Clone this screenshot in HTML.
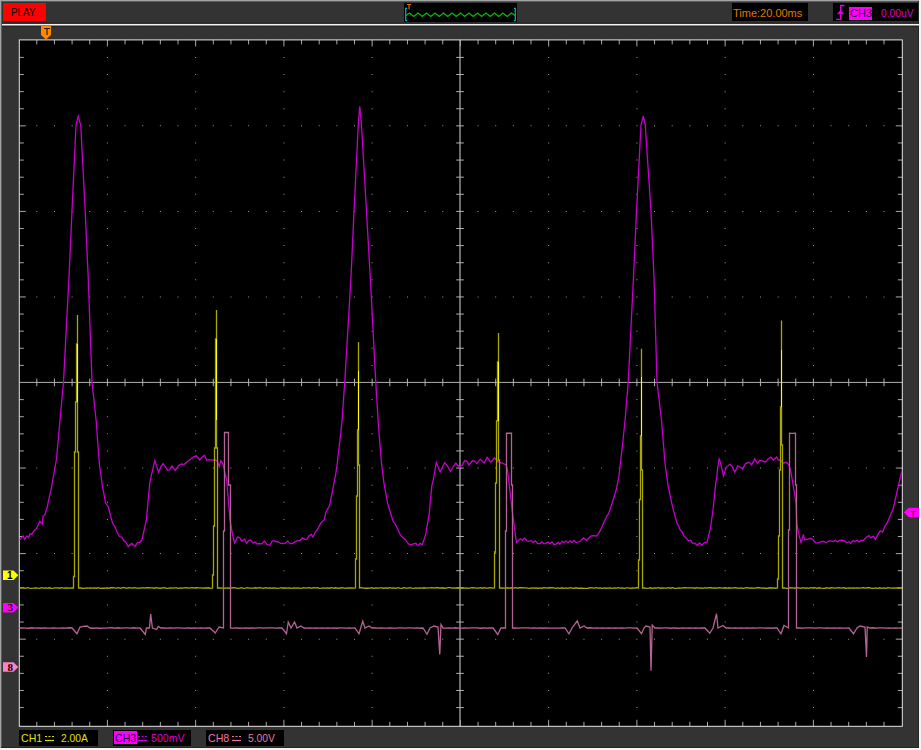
<!DOCTYPE html>
<html><head><meta charset="utf-8"><style>
html,body{margin:0;padding:0;}
body{width:921px;height:750px;overflow:hidden;background:#333;position:relative;font-family:"Liberation Sans",sans-serif;}
.a{position:absolute;}
.t{position:absolute;white-space:nowrap;font-size:11px;line-height:13px;}
</style></head><body>
<div class="a" style="left:0;top:0;width:921px;height:1px;background:#a4a4a4"></div>
<div class="a" style="left:0;top:0;width:1px;height:750px;background:#a4a4a4"></div>
<div class="a" style="left:1px;top:1px;width:918px;height:1px;background:#5a5a5a"></div>
<div class="a" style="left:1px;top:1px;width:1px;height:747px;background:#5a5a5a"></div>
<div class="a" style="left:918px;top:1px;width:1px;height:747px;background:#262626"></div>
<div class="a" style="left:1px;top:747px;width:918px;height:1px;background:#262626"></div>
<div class="a" style="left:919px;top:0;width:2px;height:750px;background:#f4f4f4"></div>
<div class="a" style="left:0;top:748px;width:921px;height:2px;background:#f4f4f4"></div>
<div class="a" style="left:2px;top:22px;width:917px;height:1px;background:#2a2a2a"></div>
<div class="a" style="left:2px;top:24px;width:917px;height:1px;background:#f2f2f2"></div>
<div class="a" style="left:2px;top:25px;width:917px;height:1px;background:#8a8a8a"></div>
<div class="a" style="left:2px;top:26px;width:917px;height:1px;background:#242424"></div>
<!-- PLAY -->
<div class="a" style="left:2px;top:2px;width:45px;height:1px;background:#263434"></div><div class="a" style="left:2px;top:2px;width:1px;height:20px;background:#263434"></div>
<div class="a" style="left:3px;top:3px;width:43px;height:18px;background:#ff0000"></div>
<div class="t" style="left:10.9px;top:5.7px;color:#0a0000;font-size:10.7px;transform:scaleX(0.923);transform-origin:0 0">PLAY</div>
<!-- mini wave box -->
<div class="a" style="left:404px;top:3px;width:113px;height:19px;background:#000"></div>
<!-- time box -->
<div class="a" style="left:732px;top:3px;width:76px;height:18px;background:#000"></div>
<div class="t" style="left:733px;top:7px;color:#e07800">Time:20.00ms</div>
<!-- trigger box -->
<div class="a" style="left:833px;top:3px;width:85px;height:18px;background:#000"></div>
<div class="a" style="left:849px;top:7px;width:23px;height:13px;background:#ff00ff"></div>
<div class="t" style="left:850px;top:7px;color:#280048">CH3</div>
<div class="t" style="left:881px;top:7px;color:#d800d8;font-size:10.3px">0.00uV</div>
<!-- bottom boxes -->
<div class="a" style="left:19px;top:730px;width:79px;height:16px;background:#000"></div>
<div class="t" style="left:21px;top:731.5px;color:#e0e000;font-size:10.6px">CH1</div>
<div class="t" style="left:61px;top:731.5px;color:#e0e000;font-size:10.3px">2.00A</div>
<div class="a" style="left:113px;top:730px;width:78px;height:16px;background:#000"></div>
<div class="a" style="left:114px;top:731px;width:23px;height:13px;background:#ff00ff"></div>
<div class="t" style="left:115px;top:731.5px;color:#280048;font-size:10.6px">CH3</div>
<div class="t" style="left:151px;top:731.5px;color:#d800d8;font-size:10.6px">500mV</div>
<div class="a" style="left:206px;top:730px;width:78px;height:16px;background:#000"></div>
<div class="t" style="left:208px;top:731.5px;color:#e878a8;font-size:10.6px">CH8</div>
<div class="t" style="left:248px;top:731.5px;color:#e878a8;font-size:10.3px">5.00V</div>
<svg class="a" style="left:0;top:0" width="921" height="750" viewBox="0 0 921 750">
<rect x="19.3" y="39.9" width="883.0" height="686.4" fill="#000"/>
<path d="M106.90 56.91h1v1h-1zM106.90 74.02h1v1h-1zM106.90 91.13h1v1h-1zM106.90 108.24h1v1h-1zM106.90 125.35h1v1h-1zM106.90 142.46h1v1h-1zM106.90 159.57h1v1h-1zM106.90 176.68h1v1h-1zM106.90 193.79h1v1h-1zM106.90 210.90h1v1h-1zM106.90 228.01h1v1h-1zM106.90 245.12h1v1h-1zM106.90 262.23h1v1h-1zM106.90 279.34h1v1h-1zM106.90 296.45h1v1h-1zM106.90 313.56h1v1h-1zM106.90 330.67h1v1h-1zM106.90 347.78h1v1h-1zM106.90 364.89h1v1h-1zM106.90 382.00h1v1h-1zM106.90 399.11h1v1h-1zM106.90 416.22h1v1h-1zM106.90 433.33h1v1h-1zM106.90 450.44h1v1h-1zM106.90 467.55h1v1h-1zM106.90 484.66h1v1h-1zM106.90 501.77h1v1h-1zM106.90 518.88h1v1h-1zM106.90 535.99h1v1h-1zM106.90 553.10h1v1h-1zM106.90 570.21h1v1h-1zM106.90 587.32h1v1h-1zM106.90 604.43h1v1h-1zM106.90 621.54h1v1h-1zM106.90 638.65h1v1h-1zM106.90 655.76h1v1h-1zM106.90 672.87h1v1h-1zM106.90 689.98h1v1h-1zM106.90 707.09h1v1h-1zM195.15 56.91h1v1h-1zM195.15 74.02h1v1h-1zM195.15 91.13h1v1h-1zM195.15 108.24h1v1h-1zM195.15 125.35h1v1h-1zM195.15 142.46h1v1h-1zM195.15 159.57h1v1h-1zM195.15 176.68h1v1h-1zM195.15 193.79h1v1h-1zM195.15 210.90h1v1h-1zM195.15 228.01h1v1h-1zM195.15 245.12h1v1h-1zM195.15 262.23h1v1h-1zM195.15 279.34h1v1h-1zM195.15 296.45h1v1h-1zM195.15 313.56h1v1h-1zM195.15 330.67h1v1h-1zM195.15 347.78h1v1h-1zM195.15 364.89h1v1h-1zM195.15 382.00h1v1h-1zM195.15 399.11h1v1h-1zM195.15 416.22h1v1h-1zM195.15 433.33h1v1h-1zM195.15 450.44h1v1h-1zM195.15 467.55h1v1h-1zM195.15 484.66h1v1h-1zM195.15 501.77h1v1h-1zM195.15 518.88h1v1h-1zM195.15 535.99h1v1h-1zM195.15 553.10h1v1h-1zM195.15 570.21h1v1h-1zM195.15 587.32h1v1h-1zM195.15 604.43h1v1h-1zM195.15 621.54h1v1h-1zM195.15 638.65h1v1h-1zM195.15 655.76h1v1h-1zM195.15 672.87h1v1h-1zM195.15 689.98h1v1h-1zM195.15 707.09h1v1h-1zM283.40 56.91h1v1h-1zM283.40 74.02h1v1h-1zM283.40 91.13h1v1h-1zM283.40 108.24h1v1h-1zM283.40 125.35h1v1h-1zM283.40 142.46h1v1h-1zM283.40 159.57h1v1h-1zM283.40 176.68h1v1h-1zM283.40 193.79h1v1h-1zM283.40 210.90h1v1h-1zM283.40 228.01h1v1h-1zM283.40 245.12h1v1h-1zM283.40 262.23h1v1h-1zM283.40 279.34h1v1h-1zM283.40 296.45h1v1h-1zM283.40 313.56h1v1h-1zM283.40 330.67h1v1h-1zM283.40 347.78h1v1h-1zM283.40 364.89h1v1h-1zM283.40 382.00h1v1h-1zM283.40 399.11h1v1h-1zM283.40 416.22h1v1h-1zM283.40 433.33h1v1h-1zM283.40 450.44h1v1h-1zM283.40 467.55h1v1h-1zM283.40 484.66h1v1h-1zM283.40 501.77h1v1h-1zM283.40 518.88h1v1h-1zM283.40 535.99h1v1h-1zM283.40 553.10h1v1h-1zM283.40 570.21h1v1h-1zM283.40 587.32h1v1h-1zM283.40 604.43h1v1h-1zM283.40 621.54h1v1h-1zM283.40 638.65h1v1h-1zM283.40 655.76h1v1h-1zM283.40 672.87h1v1h-1zM283.40 689.98h1v1h-1zM283.40 707.09h1v1h-1zM371.65 56.91h1v1h-1zM371.65 74.02h1v1h-1zM371.65 91.13h1v1h-1zM371.65 108.24h1v1h-1zM371.65 125.35h1v1h-1zM371.65 142.46h1v1h-1zM371.65 159.57h1v1h-1zM371.65 176.68h1v1h-1zM371.65 193.79h1v1h-1zM371.65 210.90h1v1h-1zM371.65 228.01h1v1h-1zM371.65 245.12h1v1h-1zM371.65 262.23h1v1h-1zM371.65 279.34h1v1h-1zM371.65 296.45h1v1h-1zM371.65 313.56h1v1h-1zM371.65 330.67h1v1h-1zM371.65 347.78h1v1h-1zM371.65 364.89h1v1h-1zM371.65 382.00h1v1h-1zM371.65 399.11h1v1h-1zM371.65 416.22h1v1h-1zM371.65 433.33h1v1h-1zM371.65 450.44h1v1h-1zM371.65 467.55h1v1h-1zM371.65 484.66h1v1h-1zM371.65 501.77h1v1h-1zM371.65 518.88h1v1h-1zM371.65 535.99h1v1h-1zM371.65 553.10h1v1h-1zM371.65 570.21h1v1h-1zM371.65 587.32h1v1h-1zM371.65 604.43h1v1h-1zM371.65 621.54h1v1h-1zM371.65 638.65h1v1h-1zM371.65 655.76h1v1h-1zM371.65 672.87h1v1h-1zM371.65 689.98h1v1h-1zM371.65 707.09h1v1h-1zM548.15 56.91h1v1h-1zM548.15 74.02h1v1h-1zM548.15 91.13h1v1h-1zM548.15 108.24h1v1h-1zM548.15 125.35h1v1h-1zM548.15 142.46h1v1h-1zM548.15 159.57h1v1h-1zM548.15 176.68h1v1h-1zM548.15 193.79h1v1h-1zM548.15 210.90h1v1h-1zM548.15 228.01h1v1h-1zM548.15 245.12h1v1h-1zM548.15 262.23h1v1h-1zM548.15 279.34h1v1h-1zM548.15 296.45h1v1h-1zM548.15 313.56h1v1h-1zM548.15 330.67h1v1h-1zM548.15 347.78h1v1h-1zM548.15 364.89h1v1h-1zM548.15 382.00h1v1h-1zM548.15 399.11h1v1h-1zM548.15 416.22h1v1h-1zM548.15 433.33h1v1h-1zM548.15 450.44h1v1h-1zM548.15 467.55h1v1h-1zM548.15 484.66h1v1h-1zM548.15 501.77h1v1h-1zM548.15 518.88h1v1h-1zM548.15 535.99h1v1h-1zM548.15 553.10h1v1h-1zM548.15 570.21h1v1h-1zM548.15 587.32h1v1h-1zM548.15 604.43h1v1h-1zM548.15 621.54h1v1h-1zM548.15 638.65h1v1h-1zM548.15 655.76h1v1h-1zM548.15 672.87h1v1h-1zM548.15 689.98h1v1h-1zM548.15 707.09h1v1h-1zM636.40 56.91h1v1h-1zM636.40 74.02h1v1h-1zM636.40 91.13h1v1h-1zM636.40 108.24h1v1h-1zM636.40 125.35h1v1h-1zM636.40 142.46h1v1h-1zM636.40 159.57h1v1h-1zM636.40 176.68h1v1h-1zM636.40 193.79h1v1h-1zM636.40 210.90h1v1h-1zM636.40 228.01h1v1h-1zM636.40 245.12h1v1h-1zM636.40 262.23h1v1h-1zM636.40 279.34h1v1h-1zM636.40 296.45h1v1h-1zM636.40 313.56h1v1h-1zM636.40 330.67h1v1h-1zM636.40 347.78h1v1h-1zM636.40 364.89h1v1h-1zM636.40 382.00h1v1h-1zM636.40 399.11h1v1h-1zM636.40 416.22h1v1h-1zM636.40 433.33h1v1h-1zM636.40 450.44h1v1h-1zM636.40 467.55h1v1h-1zM636.40 484.66h1v1h-1zM636.40 501.77h1v1h-1zM636.40 518.88h1v1h-1zM636.40 535.99h1v1h-1zM636.40 553.10h1v1h-1zM636.40 570.21h1v1h-1zM636.40 587.32h1v1h-1zM636.40 604.43h1v1h-1zM636.40 621.54h1v1h-1zM636.40 638.65h1v1h-1zM636.40 655.76h1v1h-1zM636.40 672.87h1v1h-1zM636.40 689.98h1v1h-1zM636.40 707.09h1v1h-1zM724.65 56.91h1v1h-1zM724.65 74.02h1v1h-1zM724.65 91.13h1v1h-1zM724.65 108.24h1v1h-1zM724.65 125.35h1v1h-1zM724.65 142.46h1v1h-1zM724.65 159.57h1v1h-1zM724.65 176.68h1v1h-1zM724.65 193.79h1v1h-1zM724.65 210.90h1v1h-1zM724.65 228.01h1v1h-1zM724.65 245.12h1v1h-1zM724.65 262.23h1v1h-1zM724.65 279.34h1v1h-1zM724.65 296.45h1v1h-1zM724.65 313.56h1v1h-1zM724.65 330.67h1v1h-1zM724.65 347.78h1v1h-1zM724.65 364.89h1v1h-1zM724.65 382.00h1v1h-1zM724.65 399.11h1v1h-1zM724.65 416.22h1v1h-1zM724.65 433.33h1v1h-1zM724.65 450.44h1v1h-1zM724.65 467.55h1v1h-1zM724.65 484.66h1v1h-1zM724.65 501.77h1v1h-1zM724.65 518.88h1v1h-1zM724.65 535.99h1v1h-1zM724.65 553.10h1v1h-1zM724.65 570.21h1v1h-1zM724.65 587.32h1v1h-1zM724.65 604.43h1v1h-1zM724.65 621.54h1v1h-1zM724.65 638.65h1v1h-1zM724.65 655.76h1v1h-1zM724.65 672.87h1v1h-1zM724.65 689.98h1v1h-1zM724.65 707.09h1v1h-1zM812.90 56.91h1v1h-1zM812.90 74.02h1v1h-1zM812.90 91.13h1v1h-1zM812.90 108.24h1v1h-1zM812.90 125.35h1v1h-1zM812.90 142.46h1v1h-1zM812.90 159.57h1v1h-1zM812.90 176.68h1v1h-1zM812.90 193.79h1v1h-1zM812.90 210.90h1v1h-1zM812.90 228.01h1v1h-1zM812.90 245.12h1v1h-1zM812.90 262.23h1v1h-1zM812.90 279.34h1v1h-1zM812.90 296.45h1v1h-1zM812.90 313.56h1v1h-1zM812.90 330.67h1v1h-1zM812.90 347.78h1v1h-1zM812.90 364.89h1v1h-1zM812.90 382.00h1v1h-1zM812.90 399.11h1v1h-1zM812.90 416.22h1v1h-1zM812.90 433.33h1v1h-1zM812.90 450.44h1v1h-1zM812.90 467.55h1v1h-1zM812.90 484.66h1v1h-1zM812.90 501.77h1v1h-1zM812.90 518.88h1v1h-1zM812.90 535.99h1v1h-1zM812.90 553.10h1v1h-1zM812.90 570.21h1v1h-1zM812.90 587.32h1v1h-1zM812.90 604.43h1v1h-1zM812.90 621.54h1v1h-1zM812.90 638.65h1v1h-1zM812.90 655.76h1v1h-1zM812.90 672.87h1v1h-1zM812.90 689.98h1v1h-1zM812.90 707.09h1v1h-1zM36.30 125.35h1v1h-1zM53.95 125.35h1v1h-1zM71.60 125.35h1v1h-1zM89.25 125.35h1v1h-1zM124.55 125.35h1v1h-1zM142.20 125.35h1v1h-1zM159.85 125.35h1v1h-1zM177.50 125.35h1v1h-1zM212.80 125.35h1v1h-1zM230.45 125.35h1v1h-1zM248.10 125.35h1v1h-1zM265.75 125.35h1v1h-1zM301.05 125.35h1v1h-1zM318.70 125.35h1v1h-1zM336.35 125.35h1v1h-1zM354.00 125.35h1v1h-1zM389.30 125.35h1v1h-1zM406.95 125.35h1v1h-1zM424.60 125.35h1v1h-1zM442.25 125.35h1v1h-1zM477.55 125.35h1v1h-1zM495.20 125.35h1v1h-1zM512.85 125.35h1v1h-1zM530.50 125.35h1v1h-1zM565.80 125.35h1v1h-1zM583.45 125.35h1v1h-1zM601.10 125.35h1v1h-1zM618.75 125.35h1v1h-1zM654.05 125.35h1v1h-1zM671.70 125.35h1v1h-1zM689.35 125.35h1v1h-1zM707.00 125.35h1v1h-1zM742.30 125.35h1v1h-1zM759.95 125.35h1v1h-1zM777.60 125.35h1v1h-1zM795.25 125.35h1v1h-1zM830.55 125.35h1v1h-1zM848.20 125.35h1v1h-1zM865.85 125.35h1v1h-1zM883.50 125.35h1v1h-1zM36.30 210.90h1v1h-1zM53.95 210.90h1v1h-1zM71.60 210.90h1v1h-1zM89.25 210.90h1v1h-1zM124.55 210.90h1v1h-1zM142.20 210.90h1v1h-1zM159.85 210.90h1v1h-1zM177.50 210.90h1v1h-1zM212.80 210.90h1v1h-1zM230.45 210.90h1v1h-1zM248.10 210.90h1v1h-1zM265.75 210.90h1v1h-1zM301.05 210.90h1v1h-1zM318.70 210.90h1v1h-1zM336.35 210.90h1v1h-1zM354.00 210.90h1v1h-1zM389.30 210.90h1v1h-1zM406.95 210.90h1v1h-1zM424.60 210.90h1v1h-1zM442.25 210.90h1v1h-1zM477.55 210.90h1v1h-1zM495.20 210.90h1v1h-1zM512.85 210.90h1v1h-1zM530.50 210.90h1v1h-1zM565.80 210.90h1v1h-1zM583.45 210.90h1v1h-1zM601.10 210.90h1v1h-1zM618.75 210.90h1v1h-1zM654.05 210.90h1v1h-1zM671.70 210.90h1v1h-1zM689.35 210.90h1v1h-1zM707.00 210.90h1v1h-1zM742.30 210.90h1v1h-1zM759.95 210.90h1v1h-1zM777.60 210.90h1v1h-1zM795.25 210.90h1v1h-1zM830.55 210.90h1v1h-1zM848.20 210.90h1v1h-1zM865.85 210.90h1v1h-1zM883.50 210.90h1v1h-1zM36.30 296.45h1v1h-1zM53.95 296.45h1v1h-1zM71.60 296.45h1v1h-1zM89.25 296.45h1v1h-1zM124.55 296.45h1v1h-1zM142.20 296.45h1v1h-1zM159.85 296.45h1v1h-1zM177.50 296.45h1v1h-1zM212.80 296.45h1v1h-1zM230.45 296.45h1v1h-1zM248.10 296.45h1v1h-1zM265.75 296.45h1v1h-1zM301.05 296.45h1v1h-1zM318.70 296.45h1v1h-1zM336.35 296.45h1v1h-1zM354.00 296.45h1v1h-1zM389.30 296.45h1v1h-1zM406.95 296.45h1v1h-1zM424.60 296.45h1v1h-1zM442.25 296.45h1v1h-1zM477.55 296.45h1v1h-1zM495.20 296.45h1v1h-1zM512.85 296.45h1v1h-1zM530.50 296.45h1v1h-1zM565.80 296.45h1v1h-1zM583.45 296.45h1v1h-1zM601.10 296.45h1v1h-1zM618.75 296.45h1v1h-1zM654.05 296.45h1v1h-1zM671.70 296.45h1v1h-1zM689.35 296.45h1v1h-1zM707.00 296.45h1v1h-1zM742.30 296.45h1v1h-1zM759.95 296.45h1v1h-1zM777.60 296.45h1v1h-1zM795.25 296.45h1v1h-1zM830.55 296.45h1v1h-1zM848.20 296.45h1v1h-1zM865.85 296.45h1v1h-1zM883.50 296.45h1v1h-1zM36.30 467.55h1v1h-1zM53.95 467.55h1v1h-1zM71.60 467.55h1v1h-1zM89.25 467.55h1v1h-1zM124.55 467.55h1v1h-1zM142.20 467.55h1v1h-1zM159.85 467.55h1v1h-1zM177.50 467.55h1v1h-1zM212.80 467.55h1v1h-1zM230.45 467.55h1v1h-1zM248.10 467.55h1v1h-1zM265.75 467.55h1v1h-1zM301.05 467.55h1v1h-1zM318.70 467.55h1v1h-1zM336.35 467.55h1v1h-1zM354.00 467.55h1v1h-1zM389.30 467.55h1v1h-1zM406.95 467.55h1v1h-1zM424.60 467.55h1v1h-1zM442.25 467.55h1v1h-1zM477.55 467.55h1v1h-1zM495.20 467.55h1v1h-1zM512.85 467.55h1v1h-1zM530.50 467.55h1v1h-1zM565.80 467.55h1v1h-1zM583.45 467.55h1v1h-1zM601.10 467.55h1v1h-1zM618.75 467.55h1v1h-1zM654.05 467.55h1v1h-1zM671.70 467.55h1v1h-1zM689.35 467.55h1v1h-1zM707.00 467.55h1v1h-1zM742.30 467.55h1v1h-1zM759.95 467.55h1v1h-1zM777.60 467.55h1v1h-1zM795.25 467.55h1v1h-1zM830.55 467.55h1v1h-1zM848.20 467.55h1v1h-1zM865.85 467.55h1v1h-1zM883.50 467.55h1v1h-1zM36.30 553.10h1v1h-1zM53.95 553.10h1v1h-1zM71.60 553.10h1v1h-1zM89.25 553.10h1v1h-1zM124.55 553.10h1v1h-1zM142.20 553.10h1v1h-1zM159.85 553.10h1v1h-1zM177.50 553.10h1v1h-1zM212.80 553.10h1v1h-1zM230.45 553.10h1v1h-1zM248.10 553.10h1v1h-1zM265.75 553.10h1v1h-1zM301.05 553.10h1v1h-1zM318.70 553.10h1v1h-1zM336.35 553.10h1v1h-1zM354.00 553.10h1v1h-1zM389.30 553.10h1v1h-1zM406.95 553.10h1v1h-1zM424.60 553.10h1v1h-1zM442.25 553.10h1v1h-1zM477.55 553.10h1v1h-1zM495.20 553.10h1v1h-1zM512.85 553.10h1v1h-1zM530.50 553.10h1v1h-1zM565.80 553.10h1v1h-1zM583.45 553.10h1v1h-1zM601.10 553.10h1v1h-1zM618.75 553.10h1v1h-1zM654.05 553.10h1v1h-1zM671.70 553.10h1v1h-1zM689.35 553.10h1v1h-1zM707.00 553.10h1v1h-1zM742.30 553.10h1v1h-1zM759.95 553.10h1v1h-1zM777.60 553.10h1v1h-1zM795.25 553.10h1v1h-1zM830.55 553.10h1v1h-1zM848.20 553.10h1v1h-1zM865.85 553.10h1v1h-1zM883.50 553.10h1v1h-1zM36.30 638.65h1v1h-1zM53.95 638.65h1v1h-1zM71.60 638.65h1v1h-1zM89.25 638.65h1v1h-1zM124.55 638.65h1v1h-1zM142.20 638.65h1v1h-1zM159.85 638.65h1v1h-1zM177.50 638.65h1v1h-1zM212.80 638.65h1v1h-1zM230.45 638.65h1v1h-1zM248.10 638.65h1v1h-1zM265.75 638.65h1v1h-1zM301.05 638.65h1v1h-1zM318.70 638.65h1v1h-1zM336.35 638.65h1v1h-1zM354.00 638.65h1v1h-1zM389.30 638.65h1v1h-1zM406.95 638.65h1v1h-1zM424.60 638.65h1v1h-1zM442.25 638.65h1v1h-1zM477.55 638.65h1v1h-1zM495.20 638.65h1v1h-1zM512.85 638.65h1v1h-1zM530.50 638.65h1v1h-1zM565.80 638.65h1v1h-1zM583.45 638.65h1v1h-1zM601.10 638.65h1v1h-1zM618.75 638.65h1v1h-1zM654.05 638.65h1v1h-1zM671.70 638.65h1v1h-1zM689.35 638.65h1v1h-1zM707.00 638.65h1v1h-1zM742.30 638.65h1v1h-1zM759.95 638.65h1v1h-1zM777.60 638.65h1v1h-1zM795.25 638.65h1v1h-1zM830.55 638.65h1v1h-1zM848.20 638.65h1v1h-1zM865.85 638.65h1v1h-1zM883.50 638.65h1v1h-1z" fill="#9a9a9a"/>
<path d="M460.0 39.9V726.3" stroke="#d8d8d8" stroke-width="1" fill="none"/>
<path d="M19.3 382.4H902.3" stroke="#b0b0b0" stroke-width="1" fill="none"/>
<path d="M36.80 378.59999999999997V386.2M54.45 378.59999999999997V386.2M72.10 378.59999999999997V386.2M89.75 378.59999999999997V386.2M107.40 378.59999999999997V386.2M125.05 378.59999999999997V386.2M142.70 378.59999999999997V386.2M160.35 378.59999999999997V386.2M178.00 378.59999999999997V386.2M195.65 378.59999999999997V386.2M213.30 378.59999999999997V386.2M230.95 378.59999999999997V386.2M248.60 378.59999999999997V386.2M266.25 378.59999999999997V386.2M283.90 378.59999999999997V386.2M301.55 378.59999999999997V386.2M319.20 378.59999999999997V386.2M336.85 378.59999999999997V386.2M354.50 378.59999999999997V386.2M372.15 378.59999999999997V386.2M389.80 378.59999999999997V386.2M407.45 378.59999999999997V386.2M425.10 378.59999999999997V386.2M442.75 378.59999999999997V386.2M478.05 378.59999999999997V386.2M495.70 378.59999999999997V386.2M513.35 378.59999999999997V386.2M531.00 378.59999999999997V386.2M548.65 378.59999999999997V386.2M566.30 378.59999999999997V386.2M583.95 378.59999999999997V386.2M601.60 378.59999999999997V386.2M619.25 378.59999999999997V386.2M636.90 378.59999999999997V386.2M654.55 378.59999999999997V386.2M672.20 378.59999999999997V386.2M689.85 378.59999999999997V386.2M707.50 378.59999999999997V386.2M725.15 378.59999999999997V386.2M742.80 378.59999999999997V386.2M760.45 378.59999999999997V386.2M778.10 378.59999999999997V386.2M795.75 378.59999999999997V386.2M813.40 378.59999999999997V386.2M831.05 378.59999999999997V386.2M848.70 378.59999999999997V386.2M866.35 378.59999999999997V386.2M884.00 378.59999999999997V386.2M456.2 57.41H463.8M456.2 74.52H463.8M456.2 91.63H463.8M456.2 108.74H463.8M456.2 125.85H463.8M456.2 142.96H463.8M456.2 160.07H463.8M456.2 177.18H463.8M456.2 194.29H463.8M456.2 211.40H463.8M456.2 228.51H463.8M456.2 245.62H463.8M456.2 262.73H463.8M456.2 279.84H463.8M456.2 296.95H463.8M456.2 314.06H463.8M456.2 331.17H463.8M456.2 348.28H463.8M456.2 365.39H463.8M456.2 399.61H463.8M456.2 416.72H463.8M456.2 433.83H463.8M456.2 450.94H463.8M456.2 468.05H463.8M456.2 485.16H463.8M456.2 502.27H463.8M456.2 519.38H463.8M456.2 536.49H463.8M456.2 553.60H463.8M456.2 570.71H463.8M456.2 587.82H463.8M456.2 604.93H463.8M456.2 622.04H463.8M456.2 639.15H463.8M456.2 656.26H463.8M456.2 673.37H463.8M456.2 690.48H463.8M456.2 707.59H463.8" stroke="#b0b0b0" stroke-width="1" fill="none"/>
<path d="M36.80 39.9v4.5M36.80 726.3v-4.5M54.45 39.9v4.5M54.45 726.3v-4.5M72.10 39.9v4.5M72.10 726.3v-4.5M89.75 39.9v4.5M89.75 726.3v-4.5M107.40 39.9v6.5M107.40 726.3v-6.5M125.05 39.9v4.5M125.05 726.3v-4.5M142.70 39.9v4.5M142.70 726.3v-4.5M160.35 39.9v4.5M160.35 726.3v-4.5M178.00 39.9v4.5M178.00 726.3v-4.5M195.65 39.9v6.5M195.65 726.3v-6.5M213.30 39.9v4.5M213.30 726.3v-4.5M230.95 39.9v4.5M230.95 726.3v-4.5M248.60 39.9v4.5M248.60 726.3v-4.5M266.25 39.9v4.5M266.25 726.3v-4.5M283.90 39.9v6.5M283.90 726.3v-6.5M301.55 39.9v4.5M301.55 726.3v-4.5M319.20 39.9v4.5M319.20 726.3v-4.5M336.85 39.9v4.5M336.85 726.3v-4.5M354.50 39.9v4.5M354.50 726.3v-4.5M372.15 39.9v6.5M372.15 726.3v-6.5M389.80 39.9v4.5M389.80 726.3v-4.5M407.45 39.9v4.5M407.45 726.3v-4.5M425.10 39.9v4.5M425.10 726.3v-4.5M442.75 39.9v4.5M442.75 726.3v-4.5M460.40 39.9v6.5M460.40 726.3v-6.5M478.05 39.9v4.5M478.05 726.3v-4.5M495.70 39.9v4.5M495.70 726.3v-4.5M513.35 39.9v4.5M513.35 726.3v-4.5M531.00 39.9v4.5M531.00 726.3v-4.5M548.65 39.9v6.5M548.65 726.3v-6.5M566.30 39.9v4.5M566.30 726.3v-4.5M583.95 39.9v4.5M583.95 726.3v-4.5M601.60 39.9v4.5M601.60 726.3v-4.5M619.25 39.9v4.5M619.25 726.3v-4.5M636.90 39.9v6.5M636.90 726.3v-6.5M654.55 39.9v4.5M654.55 726.3v-4.5M672.20 39.9v4.5M672.20 726.3v-4.5M689.85 39.9v4.5M689.85 726.3v-4.5M707.50 39.9v4.5M707.50 726.3v-4.5M725.15 39.9v6.5M725.15 726.3v-6.5M742.80 39.9v4.5M742.80 726.3v-4.5M760.45 39.9v4.5M760.45 726.3v-4.5M778.10 39.9v4.5M778.10 726.3v-4.5M795.75 39.9v4.5M795.75 726.3v-4.5M813.40 39.9v6.5M813.40 726.3v-6.5M831.05 39.9v4.5M831.05 726.3v-4.5M848.70 39.9v4.5M848.70 726.3v-4.5M866.35 39.9v4.5M866.35 726.3v-4.5M884.00 39.9v4.5M884.00 726.3v-4.5M19.3 57.41h4.5M902.3 57.41h-4.5M19.3 74.52h4.5M902.3 74.52h-4.5M19.3 91.63h4.5M902.3 91.63h-4.5M19.3 108.74h4.5M902.3 108.74h-4.5M19.3 125.85h6.5M902.3 125.85h-6.5M19.3 142.96h4.5M902.3 142.96h-4.5M19.3 160.07h4.5M902.3 160.07h-4.5M19.3 177.18h4.5M902.3 177.18h-4.5M19.3 194.29h4.5M902.3 194.29h-4.5M19.3 211.40h6.5M902.3 211.40h-6.5M19.3 228.51h4.5M902.3 228.51h-4.5M19.3 245.62h4.5M902.3 245.62h-4.5M19.3 262.73h4.5M902.3 262.73h-4.5M19.3 279.84h4.5M902.3 279.84h-4.5M19.3 296.95h6.5M902.3 296.95h-6.5M19.3 314.06h4.5M902.3 314.06h-4.5M19.3 331.17h4.5M902.3 331.17h-4.5M19.3 348.28h4.5M902.3 348.28h-4.5M19.3 365.39h4.5M902.3 365.39h-4.5M19.3 399.61h4.5M902.3 399.61h-4.5M19.3 416.72h4.5M902.3 416.72h-4.5M19.3 433.83h4.5M902.3 433.83h-4.5M19.3 450.94h4.5M902.3 450.94h-4.5M19.3 468.05h6.5M902.3 468.05h-6.5M19.3 485.16h4.5M902.3 485.16h-4.5M19.3 502.27h4.5M902.3 502.27h-4.5M19.3 519.38h4.5M902.3 519.38h-4.5M19.3 536.49h4.5M902.3 536.49h-4.5M19.3 553.60h6.5M902.3 553.60h-6.5M19.3 570.71h4.5M902.3 570.71h-4.5M19.3 587.82h4.5M902.3 587.82h-4.5M19.3 604.93h4.5M902.3 604.93h-4.5M19.3 622.04h4.5M902.3 622.04h-4.5M19.3 639.15h6.5M902.3 639.15h-6.5M19.3 656.26h4.5M902.3 656.26h-4.5M19.3 673.37h4.5M902.3 673.37h-4.5M19.3 690.48h4.5M902.3 690.48h-4.5M19.3 707.59h4.5M902.3 707.59h-4.5" stroke="#a8a8a8" stroke-width="1" fill="none"/>
<rect x="19.3" y="39.9" width="883.0" height="686.4" fill="none" stroke="#e4e4e4" stroke-width="1"/>
<path d="M19.80 539.60L23.00 536.00L24.60 539.20L27.00 536.00L28.60 537.60L29.80 534.00L31.80 534.00L34.20 530.40L36.60 528.40L39.80 521.20L42.20 524.00L43.00 516.40L45.00 514.40L47.40 506.80L48.20 502.00L49.80 494.80L51.00 490.00L56.50 459.00L60.00 420.00L63.50 382.00L69.00 277.00L72.00 211.00L76.00 125.00L78.20 116.30L80.75 125.00L85.20 211.00L88.20 277.00L92.00 382.00L96.10 420.00L97.80 442.50L99.50 465.10L102.10 484.10L105.60 503.20L108.20 506.70L112.50 523.10L115.10 527.26L117.70 533.50L119.73 536.75L121.77 537.09L123.80 540.50L125.95 542.52L128.10 546.50L131.60 543.40L135.10 546.20L137.40 542.66L139.70 542.51L142.00 539.60L146.30 520.50L149.80 482.40L150.90 477.30L154.80 460.60L158.70 472.40L160.90 466.64L163.10 463.60L165.30 466.63L167.50 470.40L169.70 469.75L171.90 466.00L175.30 470.40L178.70 465.50L181.40 463.94L184.10 464.60L188.00 461.10L191.00 458.70L193.65 456.91L196.30 455.80L199.70 459.70L202.15 457.10L204.60 455.30L206.60 460.20L209.50 459.57L212.40 460.20L214.85 459.74L217.30 461.10L219.30 466.50L220.80 460.60L223.20 464.60L225.20 474.30L226.60 479.20L230.00 520.00L232.80 535.80L234.60 542.90L237.60 537.00L239.65 537.65L241.70 541.10L244.70 539.30L246.50 543.50L248.60 540.56L250.70 539.90L253.10 542.90L255.10 541.93L257.10 543.98L259.10 543.50L261.75 543.89L264.40 541.10L267.10 544.43L269.80 545.30L272.20 541.10L274.20 540.69L276.20 541.91L278.20 541.70L280.60 543.43L283.00 543.50L285.35 543.11L287.70 541.10L290.10 543.70L292.50 543.50L294.90 541.91L297.30 540.58L299.70 540.50L302.60 537.90L304.75 539.38L306.90 539.20L309.10 535.67L311.30 534.40L313.00 537.00L315.60 531.80L318.20 528.12L320.80 523.10L324.30 519.70L326.00 511.90L329.50 505.80L332.10 492.80L335.50 475.50L337.30 463.30L339.00 447.70L340.70 433.90L342.10 420.00L344.75 382.00L351.00 277.00L354.00 211.50L358.25 125.00L359.75 106.25L361.50 125.00L366.50 211.50L370.25 277.00L375.75 382.00L378.10 420.00L379.80 442.50L381.50 463.30L384.10 484.10L387.60 503.20L392.80 520.50L395.40 524.50L398.00 530.00L400.60 535.24L403.20 537.90L405.23 539.43L407.27 542.63L409.30 544.40L411.45 544.70L413.60 543.90L415.78 543.23L417.95 545.61L420.12 543.43L422.30 544.80L425.70 534.40L429.20 513.60L431.80 485.90L433.40 479.20L436.30 462.60L440.20 471.90L444.60 462.60L447.55 466.14L450.50 471.40L453.20 466.58L455.90 463.10L459.30 467.50L462.00 465.40L464.70 460.60L466.90 461.35L469.10 465.00L472.50 460.60L474.70 461.28L476.90 463.60L480.30 459.20L484.20 463.10L487.10 457.20L490.60 462.10L494.50 457.70L498.40 462.10L502.30 463.10L506.20 465.00L507.70 471.40L508.60 479.20L512.75 515.00L516.50 542.50L520.25 538.75L522.41 540.35L524.57 538.07L526.73 540.76L528.89 541.31L531.05 540.61L533.20 542.54L535.36 540.84L537.52 543.29L539.68 543.78L541.84 541.87L544.00 543.75L546.00 543.11L548.00 542.13L550.00 543.94L552.00 541.73L554.00 544.66L556.00 544.09L558.00 542.42L560.00 544.30L562.00 541.40L564.00 542.50L566.00 540.98L568.00 542.90L570.00 540.81L572.00 542.51L574.00 540.34L576.00 542.28L578.00 542.03L580.00 541.30L583.50 537.90L586.90 540.50L589.10 537.49L591.30 535.80L593.90 535.55L596.50 536.10L599.10 532.60L602.50 525.70L604.30 521.40L606.45 516.71L608.60 513.60L612.10 503.20L616.40 489.30L619.00 475.50L621.60 452.90L623.30 437.30L625.10 420.00L628.25 382.00L633.50 277.00L636.50 211.50L641.00 125.00L643.25 116.25L645.25 125.00L651.00 211.50L654.00 277.00L657.00 382.00L661.50 420.00L663.30 442.50L665.00 463.30L668.10 485.90L672.50 506.70L676.80 522.30L680.30 530.00L682.30 532.14L684.30 536.73L686.30 537.90L688.33 540.76L690.37 540.23L692.40 543.00L694.77 543.16L697.15 545.54L699.52 543.02L701.90 545.10L704.50 542.52L707.10 542.20L710.60 527.50L713.20 508.40L715.80 482.40L716.50 479.30L717.80 467.10L719.10 458.90L720.40 462.30L723.50 475.80L726.10 467.50L730.00 464.10L732.40 466.94L734.80 472.30L737.80 465.80L740.00 466.70L742.60 468.90L745.60 463.60L749.10 462.30L751.70 464.90L754.70 458.90L757.40 463.20L759.75 460.30L762.10 460.60L765.60 462.30L768.20 458.68L770.80 457.10L773.40 460.20L776.50 457.10L778.60 460.20L780.80 460.23L783.00 463.20L786.50 462.30L789.10 465.40L791.00 472.50L796.00 502.50L796.80 523.60L798.60 533.20L801.00 542.80L803.40 534.40L804.60 539.80L808.20 539.20L810.60 538.28L813.00 539.80L815.70 542.79L818.40 542.80L821.00 541.60L823.60 541.36L826.20 542.80L828.60 541.07L831.00 540.95L833.40 541.60L835.40 540.39L837.40 541.90L839.40 540.40L841.80 540.06L844.20 540.55L846.60 542.80L848.70 541.68L850.80 543.26L852.90 540.51L855.00 541.60L857.10 540.02L859.20 542.09L861.30 540.09L863.40 540.40L867.00 536.80L869.00 535.64L871.00 537.90L873.00 536.20L875.40 539.20L877.80 534.67L880.20 530.80L882.60 532.00L885.00 526.01L887.40 522.40L893.40 508.00L898.20 486.40L901.80 471.40" stroke="#c400cc" stroke-width="1.3" fill="none"/>
<path d="M19.50 588.00L21.50 587.88L23.50 587.75L25.50 588.32L27.50 587.74L29.50 588.19L31.50 588.33L33.50 588.18L35.50 587.84L37.50 588.21L39.50 588.31L41.50 587.66L43.50 588.12L45.50 587.85L47.50 588.19L49.50 587.79L51.50 588.30L53.50 588.20L55.50 587.92L57.50 587.92L59.50 588.23L61.50 587.71L63.50 588.11L65.50 587.92L67.50 588.00L69.50 588.14L71.50 587.92L73.50 588.00L73.50 588.00L73.50 576.50L74.50 576.50L74.50 452.00L75.50 452.00L75.50 402.00L76.50 402.00L76.50 344.00L77.50 344.00L77.50 315.00L77.50 452.00L78.50 452.00L78.50 588.00L80.50 587.80L82.50 588.25L84.50 588.34L86.50 587.87L88.50 588.12L90.50 587.80L92.50 588.12L94.50 587.83L96.50 588.22L98.50 587.72L100.50 588.29L102.50 588.09L104.50 588.27L106.50 587.80L108.50 588.32L110.50 587.77L112.50 587.71L114.50 587.80L116.50 588.13L118.50 587.70L120.50 588.27L122.50 587.68L124.50 587.66L126.50 588.29L128.50 587.68L130.50 587.83L132.50 588.19L134.50 587.71L136.50 588.08L138.50 588.09L140.50 588.12L142.50 587.71L144.50 588.11L146.50 587.73L148.50 587.74L150.50 587.79L152.50 587.91L154.50 588.22L156.50 587.73L158.50 588.22L160.50 588.23L162.50 587.82L164.50 587.68L166.50 588.31L168.50 588.22L170.50 587.87L172.50 588.21L174.50 587.92L176.50 587.79L178.50 588.29L180.50 587.79L182.50 588.09L184.50 587.81L186.50 587.67L188.50 588.20L190.50 587.81L192.50 587.68L194.50 588.16L196.50 587.76L198.50 587.89L200.50 587.92L202.50 588.13L204.50 587.84L206.50 588.00L208.50 587.76L210.50 588.27L212.50 588.00L212.50 588.00L212.50 575.00L213.50 575.00L213.50 526.00L214.50 526.00L214.50 448.00L215.50 448.00L215.50 339.00L216.50 339.00L216.50 310.00L216.50 448.00L217.50 448.00L217.50 588.00L219.50 587.79L221.50 588.13L223.50 587.81L225.50 588.19L227.50 587.89L229.50 588.25L231.50 587.78L233.50 587.76L235.50 587.86L237.50 588.30L239.50 588.16L241.50 587.67L243.50 588.35L245.50 588.11L247.50 587.73L249.50 588.10L251.50 588.19L253.50 588.11L255.50 587.74L257.50 588.13L259.50 587.67L261.50 587.90L263.50 588.28L265.50 587.74L267.50 588.09L269.50 587.92L271.50 588.21L273.50 587.89L275.50 588.13L277.50 588.35L279.50 588.10L281.50 587.66L283.50 588.28L285.50 587.80L287.50 588.19L289.50 587.93L291.50 588.31L293.50 587.80L295.50 588.18L297.50 587.88L299.50 588.07L301.50 588.29L303.50 587.69L305.50 588.18L307.50 587.79L309.50 587.70L311.50 588.33L313.50 587.71L315.50 587.82L317.50 587.68L319.50 588.28L321.50 588.18L323.50 587.91L325.50 588.20L327.50 587.83L329.50 588.24L331.50 587.67L333.50 588.16L335.50 587.77L337.50 588.18L339.50 588.25L341.50 587.72L343.50 587.92L345.50 588.28L347.50 587.82L349.50 588.00L351.50 587.88L353.50 588.10L355.50 588.00L355.50 588.00L355.50 559.00L356.50 559.00L356.50 496.00L357.50 496.00L357.50 430.00L358.50 430.00L358.50 342.00L358.50 465.00L359.50 465.00L359.50 588.00L361.52 587.68L363.53 588.21L365.55 588.23L367.56 588.25L369.58 588.09L371.59 587.72L373.61 588.33L375.62 587.80L377.64 588.21L379.66 587.91L381.67 587.81L383.69 588.24L385.70 587.85L387.72 588.23L389.73 587.73L391.75 588.07L393.77 587.92L395.78 588.28L397.80 587.68L399.81 588.08L401.83 588.33L403.84 587.68L405.86 588.20L407.88 588.14L409.89 587.67L411.91 588.20L413.92 588.30L415.94 587.90L417.95 588.20L419.97 587.92L421.98 588.10L424.00 587.74L426.02 588.14L428.03 587.81L430.05 587.78L432.06 587.66L434.08 588.14L436.09 587.68L438.11 587.76L440.12 588.15L442.14 587.77L444.16 588.25L446.17 588.12L448.19 587.66L450.20 587.68L452.22 588.09L454.23 587.81L456.25 588.10L458.27 587.91L460.28 588.26L462.30 587.75L464.31 588.20L466.33 587.83L468.34 588.30L470.36 587.90L472.38 587.76L474.39 587.87L476.41 588.14L478.42 588.17L480.44 587.65L482.45 588.22L484.47 587.67L486.48 588.17L488.50 588.00L490.50 587.68L492.50 588.09L494.50 588.00L494.50 588.00L494.50 552.00L495.50 552.00L495.50 483.00L496.50 483.00L496.50 421.00L497.50 421.00L497.50 362.00L498.50 362.00L498.50 333.00L498.50 460.00L499.50 460.00L499.50 588.00L501.52 587.79L503.53 588.15L505.55 588.09L507.56 587.74L509.58 588.16L511.59 587.74L513.61 588.11L515.62 587.73L517.64 588.10L519.65 587.77L521.67 587.67L523.68 587.81L525.70 587.84L527.71 588.18L529.73 588.32L531.74 587.83L533.76 588.17L535.77 587.82L537.79 588.23L539.80 588.22L541.82 588.23L543.83 587.72L545.85 587.85L547.86 588.21L549.88 587.77L551.89 587.75L553.91 587.91L555.92 588.29L557.94 587.91L559.95 588.32L561.97 587.75L563.98 588.28L566.00 587.86L568.02 588.28L570.03 587.72L572.05 588.16L574.06 588.26L576.08 587.78L578.09 588.27L580.11 588.18L582.12 588.26L584.14 588.30L586.15 588.32L588.17 588.25L590.18 587.73L592.20 587.81L594.21 588.11L596.23 587.65L598.24 588.12L600.26 587.81L602.27 588.34L604.29 587.84L606.30 588.25L608.32 588.12L610.33 587.80L612.35 588.32L614.36 587.90L616.38 588.13L618.39 587.73L620.41 588.13L622.42 587.85L624.44 588.28L626.45 587.78L628.47 587.80L630.48 588.32L632.50 588.00L634.50 588.17L636.50 587.66L638.50 588.00L638.50 588.00L638.50 560.00L639.50 560.00L639.50 499.50L640.50 499.50L640.50 436.00L641.50 436.00L641.50 348.70L641.50 470.00L642.50 470.00L642.50 588.00L644.52 587.87L646.53 588.34L648.55 588.18L650.56 587.79L652.58 588.35L654.59 587.86L656.61 588.20L658.62 587.71L660.64 588.24L662.66 587.89L664.67 588.14L666.69 588.21L668.70 587.65L670.72 588.22L672.73 587.71L674.75 588.30L676.77 588.30L678.78 587.85L680.80 588.10L682.81 587.80L684.83 587.77L686.84 587.84L688.86 587.81L690.88 587.90L692.89 587.87L694.91 588.22L696.92 587.70L698.94 588.16L700.95 587.84L702.97 588.27L704.98 587.74L707.00 588.18L709.02 587.66L711.03 587.75L713.05 588.18L715.06 587.86L717.08 588.20L719.09 587.65L721.11 587.87L723.12 588.15L725.14 587.78L727.16 588.16L729.17 587.74L731.19 588.13L733.20 587.84L735.22 587.77L737.23 588.16L739.25 588.10L741.27 587.90L743.28 588.27L745.30 587.82L747.31 587.76L749.33 588.13L751.34 587.90L753.36 588.09L755.38 588.19L757.39 587.75L759.41 587.70L761.42 588.16L763.44 587.93L765.45 588.27L767.47 588.29L769.48 587.76L771.50 588.00L773.50 587.84L775.50 588.25L777.50 588.00L777.50 588.00L777.50 579.00L778.50 579.00L778.50 536.00L779.50 536.00L779.50 470.00L780.50 470.00L780.50 407.00L781.50 407.00L781.50 320.40L781.50 445.00L782.50 445.00L782.50 588.00L784.53 587.82L786.55 588.29L788.58 588.24L790.60 587.72L792.63 587.78L794.65 588.21L796.68 587.73L798.70 587.79L800.73 588.30L802.75 587.67L804.78 588.13L806.81 587.86L808.83 588.27L810.86 587.67L812.88 588.20L814.91 587.66L816.93 588.32L818.96 587.77L820.98 588.14L823.01 588.35L825.03 588.24L827.06 587.70L829.08 588.32L831.11 587.77L833.14 587.88L835.16 588.09L837.19 587.88L839.21 587.67L841.24 588.16L843.26 587.72L845.29 588.24L847.31 588.07L849.34 587.80L851.36 588.18L853.39 587.88L855.42 588.14L857.44 587.84L859.47 588.08L861.49 587.89L863.52 587.76L865.54 588.19L867.57 587.74L869.59 587.72L871.62 588.35L873.64 588.31L875.67 587.81L877.69 588.32L879.72 587.78L881.75 588.32L883.77 587.91L885.80 588.32L887.82 587.76L889.85 587.84L891.87 588.09L893.90 587.80L895.92 588.18L897.95 587.74L899.97 588.14L902.00 588.00" stroke="#a8a800" stroke-width="1.3" fill="none"/>
<path d="M77.5 344V402M216.5 339V420M358.5 371V430M498.5 362V421M641.5 377V436M781.5 349.5V407" stroke="#ffff00" stroke-width="1" fill="none" shape-rendering="crispEdges"/>
<path d="M19.50 628.00L22.59 627.87L25.68 628.06L28.76 628.24L31.85 627.78L34.94 628.21L38.03 627.80L41.12 628.23L44.21 627.79L47.29 628.16L50.38 628.05L53.47 627.89L56.56 628.06L59.65 628.21L62.74 627.88L65.82 628.06L68.91 627.77L72.00 628.00L77.00 633.75L80.00 627.00L83.50 626.35L87.00 626.00L90.00 628.00L93.12 628.25L96.25 627.91L99.38 628.23L102.50 628.09L105.62 628.12L108.75 627.92L111.88 627.75L115.00 628.18L118.12 627.77L121.25 628.07L124.38 627.89L127.50 627.78L130.62 628.08L133.75 627.76L136.88 628.07L140.00 628.00L145.30 634.50L146.40 628.00L149.40 628.00L150.70 614.00L152.40 628.00L156.60 629.50L158.30 626.50L161.00 628.00L164.06 627.89L167.12 628.09L170.19 627.90L173.25 628.21L176.31 627.82L179.38 627.83L182.44 628.11L185.50 628.18L188.56 627.82L191.62 628.25L194.69 627.84L197.75 628.06L200.81 627.89L203.88 628.21L206.94 627.89L210.00 628.00L215.25 633.00L219.00 627.00L223.50 628.00L223.50 531.00L224.50 531.00L224.50 432.50L228.50 432.50L228.50 485.00L230.50 485.00L230.50 628.00L233.53 628.10L236.56 627.84L239.59 628.23L242.62 628.06L245.65 627.80L248.68 628.24L251.71 627.91L254.74 628.18L257.76 627.82L260.79 627.85L263.82 628.22L266.85 627.85L269.88 627.92L272.91 627.92L275.94 628.10L278.97 627.80L282.00 628.00L286.50 633.75L288.25 622.00L291.00 628.00L294.50 622.00L297.00 628.00L300.75 626.00L304.00 628.00L307.00 628.21L310.00 627.85L313.00 628.17L316.00 627.94L319.00 628.19L322.00 627.78L325.00 628.08L328.00 627.85L331.00 628.14L334.00 627.79L337.00 628.23L340.00 627.84L343.00 627.90L346.00 628.11L349.00 627.89L352.00 628.16L355.00 628.00L359.00 633.75L362.75 621.25L365.00 628.00L369.00 626.00L372.00 628.00L375.00 627.83L378.00 628.21L381.00 627.90L384.00 628.19L387.00 628.21L390.00 627.87L393.00 628.09L396.00 628.06L399.00 627.80L402.00 627.92L405.00 628.20L408.00 627.90L411.00 627.92L414.00 628.11L417.00 627.93L420.00 628.25L423.00 628.00L427.00 634.25L430.00 628.00L434.00 626.00L438.00 627.00L439.75 654.50L441.00 624.50L443.00 628.00L446.12 628.20L449.25 627.90L452.38 628.10L455.50 627.76L458.62 628.12L461.75 628.17L464.88 627.87L468.00 628.06L471.12 627.81L474.25 627.83L477.38 627.86L480.50 628.22L483.62 627.79L486.75 628.12L489.88 627.84L493.00 628.00L497.75 634.50L501.00 628.00L505.50 628.00L505.50 531.00L506.50 531.00L506.50 433.25L511.50 433.25L511.50 485.00L512.50 485.00L512.50 628.00L515.59 627.91L518.68 628.14L521.76 627.86L524.85 627.81L527.94 627.91L531.03 628.06L534.12 627.88L537.21 628.05L540.29 627.90L543.38 628.23L546.47 627.90L549.56 628.08L552.65 628.12L555.74 628.19L558.82 628.05L561.91 627.87L565.00 628.00L569.00 633.75L572.00 628.00L577.25 620.75L580.00 628.00L584.00 626.00L587.00 628.00L590.12 627.77L593.25 628.20L596.38 627.94L599.50 628.10L602.62 627.92L605.75 628.06L608.88 627.87L612.00 628.08L615.12 627.90L618.25 628.18L621.38 627.91L624.50 628.19L627.62 627.87L630.75 627.90L633.88 628.12L637.00 628.00L641.50 633.75L644.00 628.00L646.00 626.00L650.00 627.00L651.00 670.75L652.25 625.00L655.00 628.00L658.12 627.94L661.25 628.18L664.38 627.79L667.50 627.89L670.62 628.23L673.75 627.81L676.88 628.24L680.00 628.10L683.12 627.93L686.25 628.13L689.38 627.87L692.50 628.15L695.62 627.92L698.75 628.15L701.88 627.82L705.00 628.00L709.75 633.25L713.00 628.00L716.50 613.75L718.00 628.00L723.00 625.50L726.00 628.00L729.00 627.93L732.00 628.13L735.00 627.83L738.00 628.16L741.00 627.95L744.00 628.12L747.00 627.87L750.00 628.15L753.00 627.86L756.00 628.10L759.00 627.88L762.00 627.84L765.00 628.18L768.00 627.86L771.00 628.24L774.00 627.83L777.00 628.00L781.00 633.75L784.00 625.50L788.50 628.00L788.50 530.00L789.50 530.00L789.50 433.25L792.50 433.45L795.50 433.25L795.50 485.00L796.50 485.00L796.50 628.00L799.59 627.83L802.68 628.13L805.76 627.78L808.85 627.87L811.94 627.94L815.03 628.15L818.12 627.88L821.21 627.92L824.29 628.10L827.38 627.90L830.47 628.16L833.56 627.90L836.65 628.18L839.74 627.83L842.82 628.22L845.91 628.12L849.00 628.00L853.50 633.75L857.00 628.00L860.00 626.00L865.00 627.00L866.50 657.00L867.25 627.00L870.00 628.00L873.20 627.77L876.40 628.19L879.60 627.81L882.80 627.79L886.00 628.17L889.20 627.84L892.40 628.11L895.60 627.84L898.80 628.10L902.00 628.00" stroke="#b46494" stroke-width="1.3" fill="none"/>
<path d="M406 15.5L409.50 13L413.75 16.5L418.00 13L422.25 16.5L426.49 13L430.74 16.5L434.99 13L439.24 16.5L443.48 13L447.73 16.5L451.98 13L456.23 16.5L460.47 13L464.72 16.5L468.96 13L473.21 16.5L477.46 13L481.71 16.5L485.95 13L490.20 16.5L494.45 13L498.70 16.5L502.94 13L507.19 16.5L511.44 13L515 15.5" stroke="#00c000" stroke-width="1.2" fill="none"/>
<path d="M407 8.3h-1.3v12.4h1.3" stroke="#00b8c8" stroke-width="1.2" fill="none"/>
<path d="M514 8.3h1.3v12.4h-1.3" stroke="#00b8c8" stroke-width="1.2" fill="none"/>
<path d="M407 4.5h4M409 4.5v5" stroke="#e07000" stroke-width="1.1" fill="none"/>
<path d="M45 736.5h9" stroke="#e0e000" stroke-width="1" stroke-dasharray="2 1.5" fill="none"/>
<path d="M45 740.5h9" stroke="#e0e000" stroke-width="1.2" fill="none"/>
<path d="M138 736.5h9" stroke="#c000e0" stroke-width="1" stroke-dasharray="2 1.5" fill="none"/>
<path d="M138 740.5h9" stroke="#c000e0" stroke-width="1.2" fill="none"/>
<path d="M232 736.5h9" stroke="#e878a8" stroke-width="1" stroke-dasharray="2 1.5" fill="none"/>
<path d="M232 740.5h9" stroke="#e878a8" stroke-width="1.2" fill="none"/>
<path d="M836 19.3h4.7v-13.8h3.8" stroke="#e800e8" stroke-width="1.3" fill="none"/>
<path d="M837.6 13.8h6.2l-3.1-3.6z" fill="#e800e8" stroke="#e800e8" stroke-width="0.6"/>
<path d="M41 26h10v9l-5 4.5l-5-4.5z" fill="#ff8800"/>
<path d="M44 28.5h6M47 28.5v6.5" stroke="#302000" stroke-width="1.2" fill="none"/>
<path d="M3 570.5h10.5l4.8 4.7l-4.8 4.8h-10.5z" fill="#ffff00"/>
<path d="M3 603h10.5l4.8 4.6l-4.8 4.8h-10.5z" fill="#ff00ff"/>
<path d="M3 662.3h10.5l4.8 4.7l-4.8 4.8h-10.5z" fill="#ff80c8"/>
<path d="M919 507.8h-10.5l-4.6 4.6l4.6 4.6h10.5z" fill="#ff00ff"/>
</svg>
<div class="t" style="left:7px;top:569px;color:#000;font-size:10px;font-weight:bold">1</div>
<div class="t" style="left:7.5px;top:601px;color:#000;font-size:11px;font-weight:bold;font-family:'Liberation Serif'">3</div>
<div class="t" style="left:7.5px;top:660.5px;color:#000;font-size:11px;font-weight:bold;font-family:'Liberation Serif'">8</div>
<div class="t" style="left:910.3px;top:506.5px;color:#300050;font-size:9.5px">T</div>
</body></html>
